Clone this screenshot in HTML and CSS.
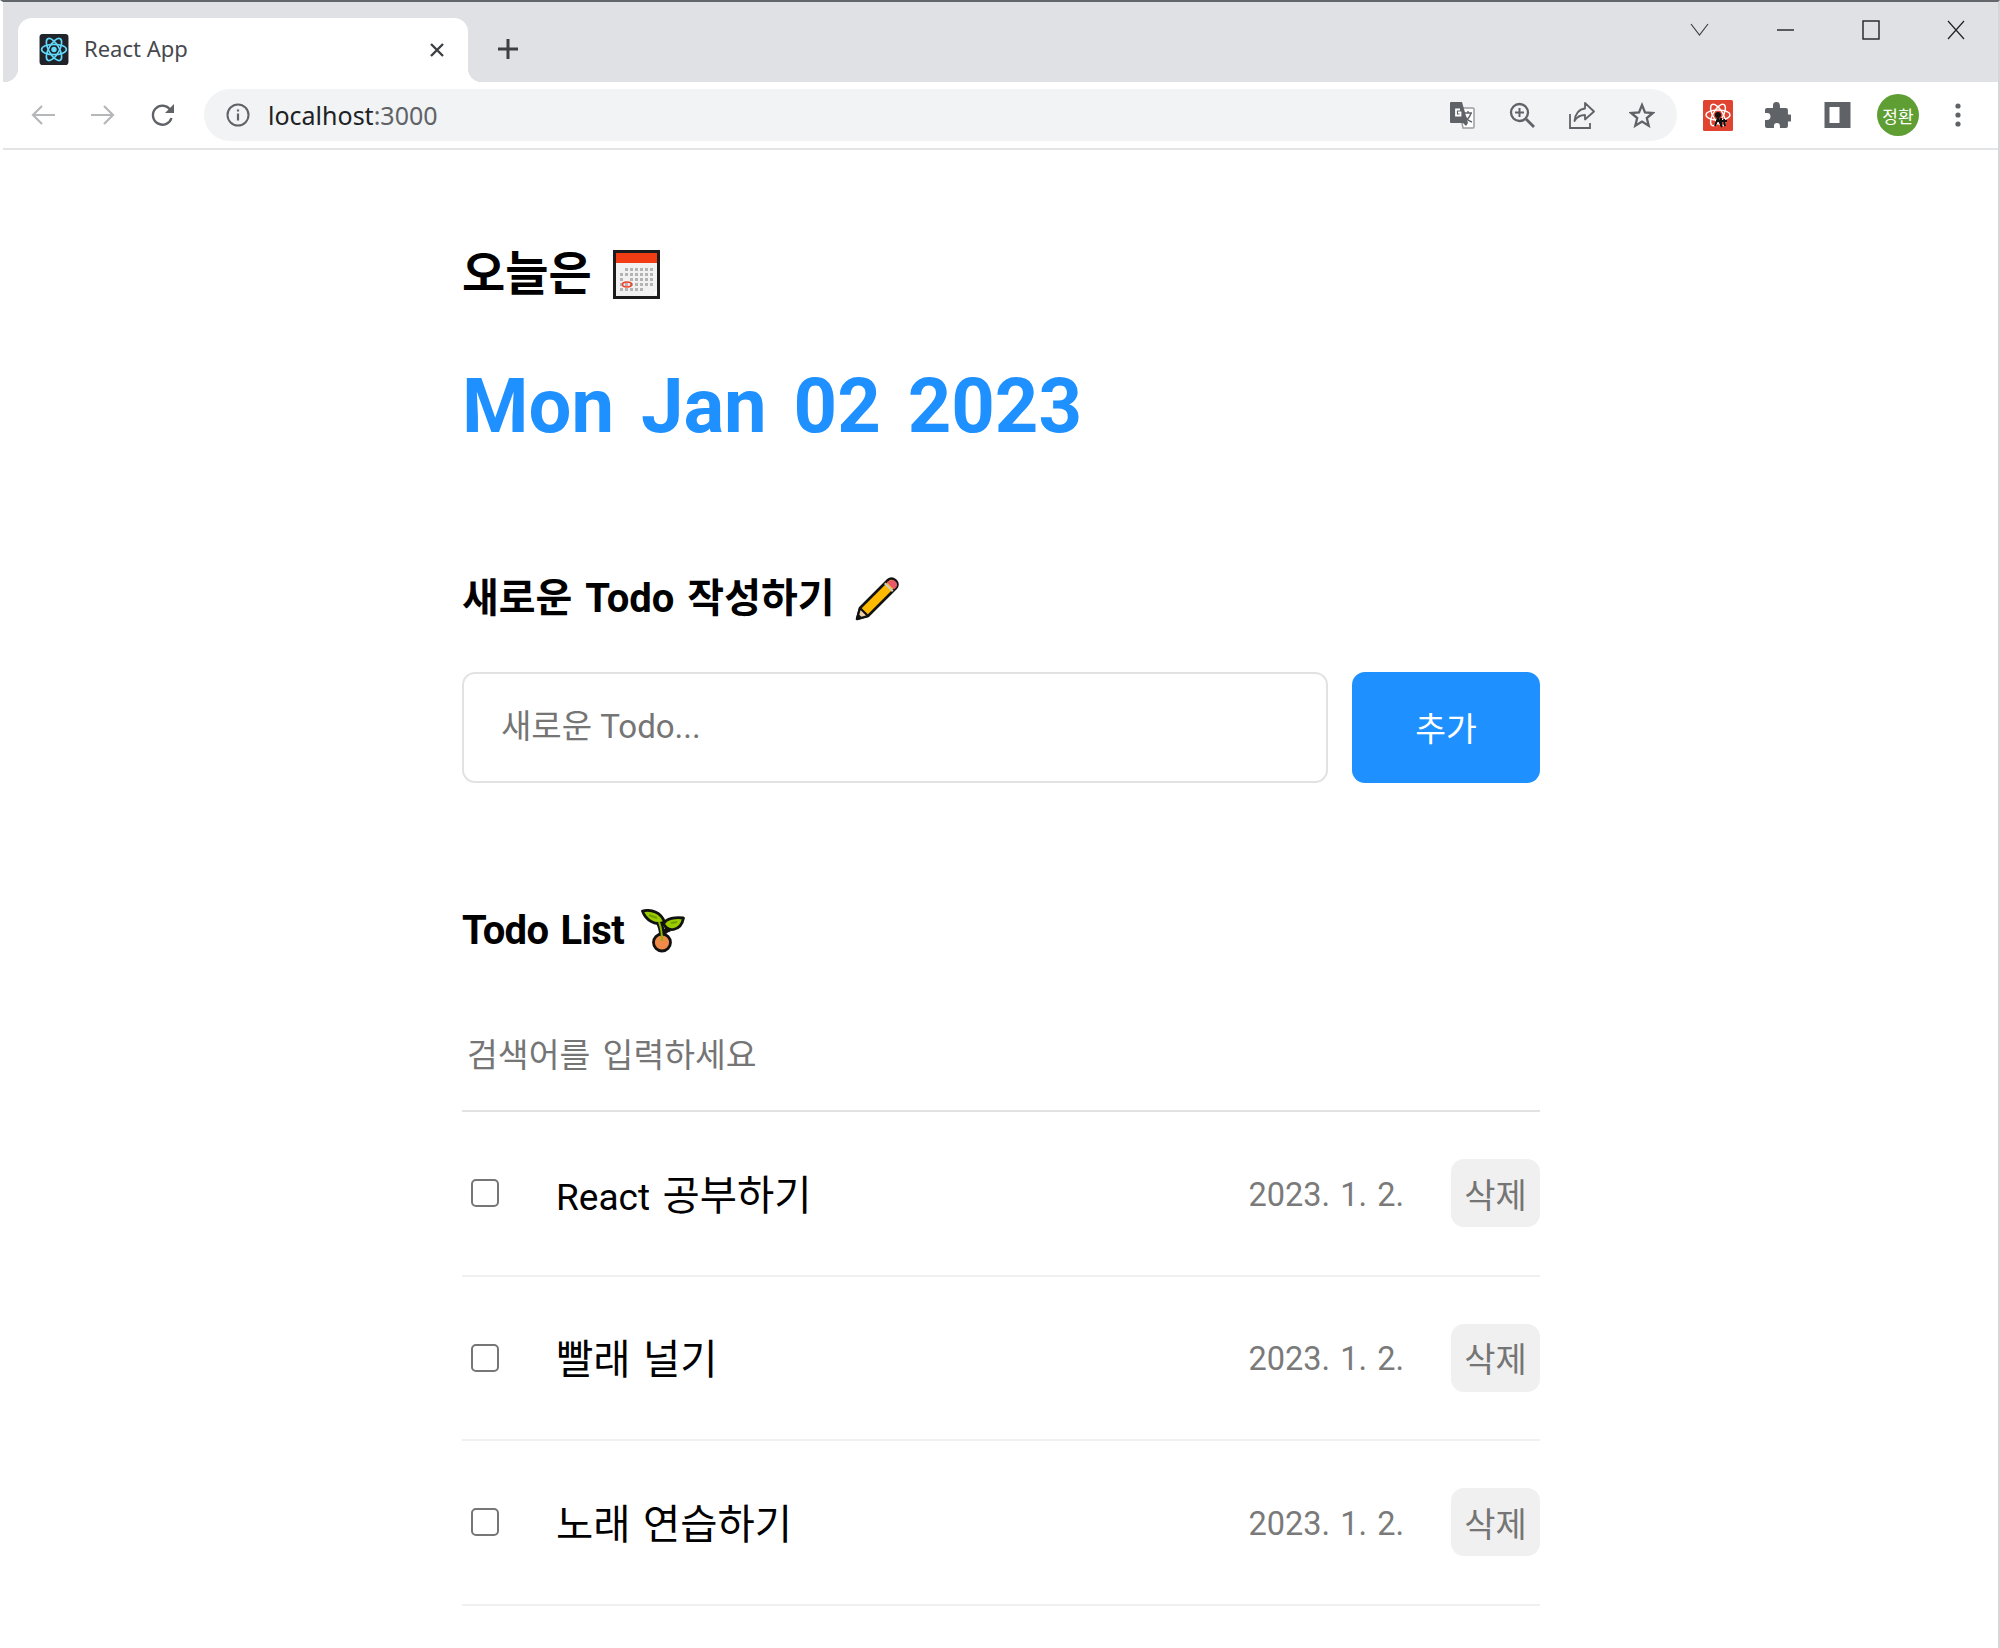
FILE: index.html
```html
<!DOCTYPE html>
<html lang="ko">
<head>
<meta charset="utf-8">
<title>React App</title>
<link rel="stylesheet" href="styles.css">
</head>
<body>
<div class="frame">
  <header class="browser">
    <div class="tabstrip">
      <div class="tab">
        <svg class="favicon" width="30" height="31" viewBox="0 0 28 30"><rect width="28" height="30" rx="3" fill="#20232a"/><g fill="none" stroke="#61dafb" stroke-width="1.6"><ellipse cx="14" cy="15" rx="12" ry="5"/><ellipse cx="14" cy="15" rx="12" ry="5" transform="rotate(60 14 15)"/><ellipse cx="14" cy="15" rx="12" ry="5" transform="rotate(120 14 15)"/></g><circle cx="14" cy="15" r="2.6" fill="#61dafb"/></svg>
        <span class="tab-title">React App</span>
        <svg class="tab-close" width="16" height="16" viewBox="0 0 16 16"><path d="M2 2l12 12M14 2L2 14" stroke="#3c4043" stroke-width="2.4" fill="none"/></svg>
      </div>
      <svg class="new-tab" width="22" height="22" viewBox="0 0 22 22"><path d="M11 1v20M1 11h20" stroke="#3c4043" stroke-width="3" fill="none"/></svg>
      <div class="window-controls">
        <svg width="20" height="14" viewBox="0 0 20 14"><path d="M1 1l8.500 11L18 1" stroke="#3c4043" stroke-width="1.200" fill="none"/></svg>
        <svg width="18" height="4" viewBox="0 0 18 4"><path d="M0 2h17" stroke="#202124" stroke-width="1.400"/></svg>
        <svg width="18" height="20" viewBox="0 0 18 20"><rect x="1" y="1" width="16" height="18" fill="none" stroke="#202124" stroke-width="1.400"/></svg>
        <svg width="18" height="20" viewBox="0 0 18 20"><path d="M1 1l16 18M17 1L1 19" stroke="#202124" stroke-width="1.200" fill="none"/></svg>
      </div>
    </div>
    <div class="toolbar">
      <div class="nav-icons">
        <svg width="26" height="24" viewBox="0 0 26 24"><path d="M25 12H3M12 3l-9 9 9 9" stroke="#b5b7ba" stroke-width="2.200" fill="none"/></svg>
        <svg width="26" height="24" viewBox="0 0 26 24"><path d="M1 12h22M14 3l9 9-9 9" stroke="#b5b7ba" stroke-width="2.200" fill="none"/></svg>
        <svg width="26" height="26" viewBox="0 0 26 26"><path d="M21.500 16a9.500 9.500 0 1 1-1.300-8.300" stroke="#5f6368" stroke-width="2.400" fill="none"/><path d="M24 2v9h-9z" fill="#5f6368"/></svg>
      </div>
      <div class="omnibox">
        <svg class="info" width="24" height="24" viewBox="0 0 24 24"><circle cx="12" cy="12" r="10.500" fill="none" stroke="#5f6368" stroke-width="2"/><path d="M12 10.500v7M12 6.500v2" stroke="#5f6368" stroke-width="2.200"/></svg>
        <span class="url">localhost<span class="url-port">:3000</span></span>
        <div class="omni-actions">
          <svg width="26" height="28" viewBox="0 0 26 28"><path d="M10 7h14a1 1 0 0 1 1 1v18a1 1 0 0 1-1 1H14z" fill="#fff" stroke="#9a9da1" stroke-width="1.500"/><path d="M2 1h11l6 21H2a1 1 0 0 1-1-1V2a1 1 0 0 1 1-1z" fill="#5f6368"/><path d="M17 25l2-3h-5z" fill="#5f6368"/><path d="M11 8.500H7v6h4.500V11.500H9" stroke="#fff" stroke-width="1.800" fill="none"/><path d="M15 12h8M19 10v2M22 12c-1 4-4 7-7 9M16 15c1 3 4 5 7 6" stroke="#5f6368" stroke-width="1.400" fill="none"/></svg>
          <svg width="26" height="26" viewBox="0 0 26 26"><circle cx="10.500" cy="10.500" r="8.500" fill="none" stroke="#5f6368" stroke-width="2.300"/><path d="M17 17l8 8" stroke="#5f6368" stroke-width="2.800"/><path d="M10.500 6v9M6 10.500h9" stroke="#5f6368" stroke-width="2"/></svg>
          <svg width="26" height="28" viewBox="0 0 26 28"><path d="M1 13v14h20v-5" stroke="#5f6368" stroke-width="1.800" fill="none"/><path d="M16 2l9 8.500-9 8v-4.500c-5 0-8 1.500-10.500 6 .5-7 4.500-12 10.500-12.500z" stroke="#5f6368" stroke-width="1.800" fill="none" stroke-linejoin="round"/></svg>
          <svg width="26" height="26" viewBox="0 0 26 26"><path d="M13 3l3 7.400 7.800.6-6 5 1.900 7.700L13 19.500l-6.700 4.200 1.900-7.700-6-5 7.800-.6z" stroke="#5f6368" stroke-width="2.300" fill="none" stroke-linejoin="miter"/></svg>
        </div>
      </div>
      <div class="ext-icons">
        <svg class="ext-react" width="30" height="31" viewBox="0 0 30 31"><rect width="30" height="31" rx="1.500" fill="#e0432f"/><g fill="none" stroke="#fff" stroke-width="1.400"><ellipse cx="15" cy="15" rx="12" ry="5"/><ellipse cx="15" cy="15" rx="12" ry="5" transform="rotate(60 15 15)"/><ellipse cx="15" cy="15" rx="12" ry="5" transform="rotate(120 15 15)"/></g><circle cx="15" cy="15" r="3" fill="#111"/><path d="M15 18l-3 8M15 18l4 9M18 18v8M21 19l1 7M13 21h11" stroke="#111" stroke-width="2" fill="none"/></svg>
        <svg class="ext-puzzle" width="27" height="27" viewBox="0 0 26 26"><path d="M9 3.500a3.500 3.500 0 0 1 7 0V6h6a2 2 0 0 1 2 2v4.500h1.500a3.500 3.500 0 0 1 0 7H24V24a2 2 0 0 1-2 2h-6v-2a3 3 0 0 0-6 0v2H3a2 2 0 0 1-2-2v-6h2a3.500 3.500 0 0 0 0-7H1V8a2 2 0 0 1 2-2h6z" fill="#5f6368" transform="scale(.96)"/></svg>
        <svg class="ext-panel" width="27" height="26" viewBox="0 0 26 26"><rect x="2.500" y="2.500" width="21" height="21" fill="#fff" stroke="#5f6368" stroke-width="5"/><rect x="15" y="2" width="9" height="22" fill="#5f6368"/></svg>
        <span class="avatar">정환</span>
        <svg class="menu" width="6" height="24" viewBox="0 0 6 24"><circle cx="3" cy="3" r="2.600" fill="#5f6368"/><circle cx="3" cy="12" r="2.600" fill="#5f6368"/><circle cx="3" cy="21" r="2.600" fill="#5f6368"/></svg>
      </div>
    </div>
  </header>
  <main class="app">
    <section class="today">
      <h4 class="h-today">오늘은
        <svg class="emoji" width="47" height="49" viewBox="0 0 47 49"><rect x="1.500" y="1.500" width="44" height="46" fill="#f2f2f2" stroke="#1c1c1c" stroke-width="3"/><rect x="3" y="3" width="41" height="10" fill="#f23c14"/><g fill="#b4b4b4"><path d="M12 18h3v3h-3zM17 18h3v3h-3zM22 18h3v3h-3zM27 18h3v3h-3zM32 18h3v3h-3zM37 18h3v3h-3zM7 23h3v3H7zM12 23h3v3h-3zM17 23h3v3h-3zM22 23h3v3h-3zM27 23h3v3h-3zM32 23h3v3h-3zM37 23h3v3h-3zM7 28h3v3H7zM17 28h3v3h-3zM22 28h3v3h-3zM27 28h3v3h-3zM32 28h3v3h-3zM37 28h3v3h-3zM7 33h3v3H7zM12 33h3v3h-3zM17 33h3v3h-3zM22 33h3v3h-3zM27 33h3v3h-3zM32 33h3v3h-3zM37 33h3v3h-3zM7 38h3v3H7zM12 38h3v3h-3zM17 38h3v3h-3zM22 38h3v3h-3zM27 38h3v3h-3z"/></g><ellipse cx="14" cy="34.500" rx="4.500" ry="2.500" fill="none" stroke="#f0432a" stroke-width="1.600"/><path d="M40 44l4-4v4z" fill="#fff"/></svg>
      </h4>
      <h1 class="date">Mon Jan 02 2023</h1>
    </section>
    <section class="editor">
      <h4 class="h-section">새로운 Todo 작성하기
        <svg class="emoji" width="44" height="44" viewBox="0 0 44 44"><path d="M2 42l3-11L33 3c2-2 5-2 7 0l1 1c2 2 2 5 0 7L13 39z" fill="#ffb900" stroke="#111" stroke-width="2.600" stroke-linejoin="round"/><path d="M31.500 5l7.500 7.500 2-2c1.500-1.500 1.500-4 0-5.500l-1-1c-1.500-1.500-4-1.500-5.500 0z" fill="#e8596a"/><path d="M29 7l8 8 1.500-1.500-8-8z" fill="#ccc"/><path d="M5 31l8 8-11 3z" fill="#f0cfa8" stroke="#111" stroke-width="2.200" stroke-linejoin="round"/><path d="M2 42l1.500-5 3.500 3.500z" fill="#111"/></svg>
      </h4>
      <div class="add-row">
        <input class="add-input" type="text" placeholder="새로운 Todo...">
        <button class="add-btn" type="button">추가</button>
      </div>
    </section>
    <section class="list">
      <h4 class="h-section h-list">Todo List
        <svg class="emoji" width="44" height="44" viewBox="0 0 44 44"><path d="M17 12c3 5 4 9 4 14" fill="none" stroke="#111" stroke-width="6"/><path d="M29 20c-4 1-7 3-8 7" fill="none" stroke="#111" stroke-width="5"/><path d="M1.500 2C10 0 20 3 23.500 13 15 17 5 12 1.500 2z" fill="#9ccb00" stroke="#111" stroke-width="2.800" stroke-linejoin="round"/><path d="M42.500 9C35 8 25 9 22.500 15 27 24 40 22 42.500 9z" fill="#9ccb00" stroke="#111" stroke-width="2.800" stroke-linejoin="round"/><path d="M8 6l8 3M30 14l6-1" stroke="#6fa000" stroke-width="2.200"/><circle cx="21" cy="33.500" r="8.500" fill="#f08a48" stroke="#111" stroke-width="2.800"/><path d="M18 13c2 5 3 10 3 19" fill="none" stroke="#8ab800" stroke-width="2"/></svg>
      </h4>
      <input class="search" type="text" placeholder="검색어를 입력하세요">
      <div class="item">
        <input class="check" type="checkbox">
        <span class="item-text"><span class="latin">React</span> 공부하기</span>
        <span class="item-date">2023. 1. 2.</span>
        <button class="del" type="button">삭제</button>
      </div>
      <div class="item">
        <input class="check" type="checkbox">
        <span class="item-text">빨래 널기</span>
        <span class="item-date">2023. 1. 2.</span>
        <button class="del" type="button">삭제</button>
      </div>
      <div class="item">
        <input class="check" type="checkbox">
        <span class="item-text">노래 연습하기</span>
        <span class="item-date">2023. 1. 2.</span>
        <button class="del" type="button">삭제</button>
      </div>
    </section>
  </main>
</div>
</body>
</html>
```

FILE: styles.css
```css
* { box-sizing: border-box; }
html, body { margin: 0; padding: 0; background: #fff; }
body { font-family: "Noto Sans", "Noto Sans CJK KR", sans-serif; color: #000; }

.frame {
  height: 1648px;
  overflow: hidden;
  border-top: 2px solid #63676b;
  border-left: 3px solid #fff;
  border-right: 2px solid #d5d6d8;
  display: flex;
  flex-direction: column;
}

/* browser chrome */
.tabstrip {
  height: 80px;
  background: #dfe1e5;
  display: flex;
  align-items: flex-start;
  padding-left: 15px;
}
.tab {
  position: relative;
  width: 450px;
  height: 64px;
  margin-top: 16px;
  background: #fff;
  border-radius: 14px 14px 0 0;
  display: flex;
  align-items: center;
  padding: 0 23px 0 21px;
}
.tab::before, .tab::after {
  content: "";
  position: absolute;
  bottom: 0;
  width: 14px;
  height: 14px;
}
.tab::before { left: -14px; background: radial-gradient(circle at 0 0, transparent 14px, #fff 14.500px); }
.tab::after { right: -14px; background: radial-gradient(circle at 100% 0, transparent 14px, #fff 14.500px); }
.favicon { flex: none; margin-bottom: 1px; }
.tab-title { margin-left: 15px; padding-bottom: 4px; font-size: 22px; color: #45494e; flex: 1; }
.tab-close { flex: none; margin-bottom: 1px; }
.new-tab { margin: 36px 0 0 29px; flex: none; }
.window-controls {
  margin-left: auto;
  display: flex;
  align-items: center;
  gap: 67px;
  padding: 18px 33px 0 0;
  height: 38px;
}
.window-controls svg { flex: none; }

.toolbar {
  height: 68px;
  background: #fff;
  border-bottom: 2px solid #e3e4e6;
  display: flex;
  align-items: center;
}
.nav-icons {
  display: flex;
  align-items: center;
  gap: 34px;
  padding-left: 27px;
  width: 201px;
  flex: none;
}
.omnibox {
  width: 1473px;
  height: 52px;
  flex: none;
  background: #f1f3f4;
  border-radius: 26px;
  display: flex;
  align-items: center;
  padding-left: 22px;
}
.url { margin-left: 18px; font-size: 25px; color: #202124; }
.url-port { color: #5f6368; }
.omni-actions {
  margin-left: auto;
  display: flex;
  align-items: center;
  gap: 34px;
  padding-right: 22px;
}
.ext-icons {
  display: flex;
  align-items: center;
  padding-left: 26px;
}
.ext-puzzle { margin-left: 31px; }
.ext-panel { margin-left: 33px; }
.avatar {
  width: 42px;
  height: 42px;
  margin-left: 26px;
  border-radius: 50%;
  background: #5f9e33;
  color: #fff;
  font-size: 17px;
  display: flex;
  align-items: center;
  justify-content: center;
}
.menu { margin-left: 36px; }

/* app */
.app {
  width: 1078px;
  margin-left: 459px;
  padding-top: 99px;
  font-family: Roboto, "Noto Sans CJK KR", sans-serif;
}
h1, h4 { margin: 0; }
.h-today, .h-section {
  font-size: 40px;
  font-weight: 700;
  line-height: 50px;
  display: flex;
  align-items: center;
  gap: 20px;
  word-spacing: 3px;
}
.h-today { font-size: 47px; gap: 21px; }
.h-list { letter-spacing: -0.7px; gap: 17px; }
.date {
  margin-top: 55px;
  color: #1e90ff;
  font-size: 76px;
  font-weight: 700;
  line-height: 104px;
  word-spacing: 8px;
}
.editor { margin-top: 116px; }
.add-row { display: flex; gap: 24px; margin-top: 48px; }
.add-input {
  flex: 1;
  height: 111px;
  border: 2px solid #e2e2e2;
  border-radius: 13px;
  padding: 0 37px 2px;
  font: inherit;
  font-size: 33px;
  outline: none;
}
.add-input::placeholder, .search::placeholder { color: #757575; opacity: 1; }
.add-btn {
  width: 188px;
  height: 111px;
  border: 0;
  border-radius: 13px;
  background: #1e90ff;
  color: #fff;
  font: inherit;
  font-size: 33.5px;
  padding: 0 0 3px;
}
.list { margin-top: 123px; }
.search {
  display: block;
  width: 100%;
  height: 111px;
  margin-top: 45px;
  padding: 0 5px;
  border: 0;
  border-bottom: 2px solid #e2e2e2;
  font: inherit;
  font-size: 33.5px;
  word-spacing: 4px;
  outline: none;
}
.item {
  height: 164.500px;
  display: flex;
  align-items: center;
  border-bottom: 2px solid #f0f0f0;
}
.check {
  appearance: none;
  flex: none;
  width: 28px;
  height: 28px;
  margin: 0 0 0 9px;
  border: 2px solid #767676;
  border-radius: 5px;
  background: #fff;
}
.item-text { margin-left: 57px; padding-bottom: 2px; font-size: 40.5px; flex: 1; word-spacing: 2.500px; }
.latin { font-size: 37px; }
.item-date { padding-top: 3px; font-size: 32.5px; color: #7a7a7a; margin-right: 47px; word-spacing: 2px; }
.del {
  width: 89px;
  height: 68px;
  border: 0;
  border-radius: 13px;
  background: #f0f0f0;
  color: #757575;
  font: inherit;
  font-size: 34px;
  padding: 0;
}
```
